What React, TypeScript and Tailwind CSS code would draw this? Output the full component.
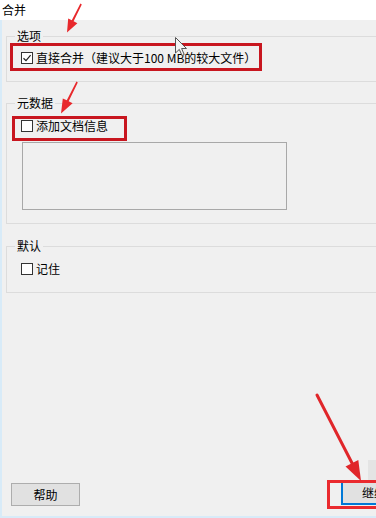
import React from "react";

const font = { fontFamily: '"Noto Sans CJK SC", "Noto Sans", sans-serif' };

const Box = ({ checked = false }: { checked?: boolean }) => (
  <span className="w-[12px] h-[12px] border border-[#333] bg-white flex items-center justify-center shrink-0">
    {checked && (
      <svg width="10" height="10" viewBox="0 0 10 10">
        <path d="M1.5 5.2 L4 7.6 L8.6 2.2" fill="none" stroke="#222" strokeWidth="1.2" />
      </svg>
    )}
  </span>
);

const Row = ({ label, checked }: { label: string; checked?: boolean }) => (
  <label className="flex items-center gap-[3px] h-[16px] pl-[14px] text-[12px] leading-[16px] text-black">
    <Box checked={checked} />
    <span>{label}</span>
  </label>
);

const Group = ({ title, children, className }: { title: string; children: React.ReactNode; className: string }) => (
  <fieldset className={`ml-[4px] w-[380px] border border-[#dcdcdc] ${className}`}>
    <legend className="ml-[8px] px-[2px] text-[12px] leading-[14px] text-black">{title}</legend>
    {children}
  </fieldset>
);

export default function App() {
  return (
    <div className="relative w-[376px] h-[518px] overflow-hidden bg-[#f0f0f0] flex flex-col" style={font}>
      {/* title bar */}
      <div className="h-[20px] bg-white pl-[2px] text-[12px] leading-[20px] text-black shrink-0">合并</div>

      <div className="flex-1 flex flex-col border-l-2 border-b-2 border-[#d8ebf8]">
        <Group title="选项" className="mt-[9px] pt-[7px] pb-[15px]">
          <Row label="直接合并（建议大于100 MB的较大文件）" checked />
        </Group>

        <Group title="元数据" className="mt-[14px] pt-[8px] pb-[13px]">
          <Row label="添加文档信息" />
          <div className="mt-[8px] ml-[15px] w-[265px] h-[68px] border border-[#a8a8a8] bg-[#f0f0f0]" />
        </Group>

        <Group title="默认" className="mt-[15px] pt-[8px] pb-[15px]">
          <Row label="记住" />
        </Group>

        <div className="mt-auto mb-[10px] flex items-end pl-[9px]">
          <button className="w-[69px] h-[23px] shrink-0 border border-[#adadad] bg-[#e1e1e1] text-[12px] text-black">
            帮助
          </button>
          <button className="ml-[261px] w-[66px] h-[24px] shrink-0 border-2 border-[#0078d7] bg-[#e1e1e1] text-[12px] text-black mb-[1px]">
            继续
          </button>
        </div>
      </div>

      {/* faint shape behind the right button */}
      <div className="absolute left-[368px] top-[460px] w-[10px] h-[21px] bg-[#e4e4e4]" />

      {/* annotations */}
      <div className="absolute left-[10px] top-[43px] w-[252px] h-[28px] border-[3px] border-[#c8161f]" />
      <div className="absolute left-[12px] top-[116px] w-[115px] h-[25px] border-[3px] border-[#c8161f]" />
      <div className="absolute left-[327px] top-[480px] w-[56px] h-[29px] border-[3px] border-[#ea2a2e]" />

      <svg className="absolute inset-0 pointer-events-none" width="376" height="518" viewBox="0 0 376 518">
        <polygon points="80.4,3.6 81.8,4.4 73.6,21.2 77.4,23.2 67,32.5 68.2,18.4 71.8,20.3" fill="#e8282c" />
        <polygon points="76.4,81.6 77.8,82.4 68.7,101.3 72.6,103.3 61,113.5 62.8,98.6 66.8,100.3" fill="#e8282c" />
        <line x1="317" y1="395" x2="353" y2="465" stroke="#e0262a" strokeWidth="3" strokeLinecap="round" />
        <polygon points="361,481 345.5,466.6 358.3,460" fill="#e0262a" />
        {/* mouse cursor */}
        <path
          d="M175.5 37.5 L175.5 53 L179.3 49.4 L182 55.5 L184.2 54.5 L181.6 48.5 L186.5 48.5 Z"
          fill="#f4f4f4"
          stroke="#555"
          strokeWidth="1"
          strokeLinejoin="round"
        />
      </svg>
    </div>
  );
}
